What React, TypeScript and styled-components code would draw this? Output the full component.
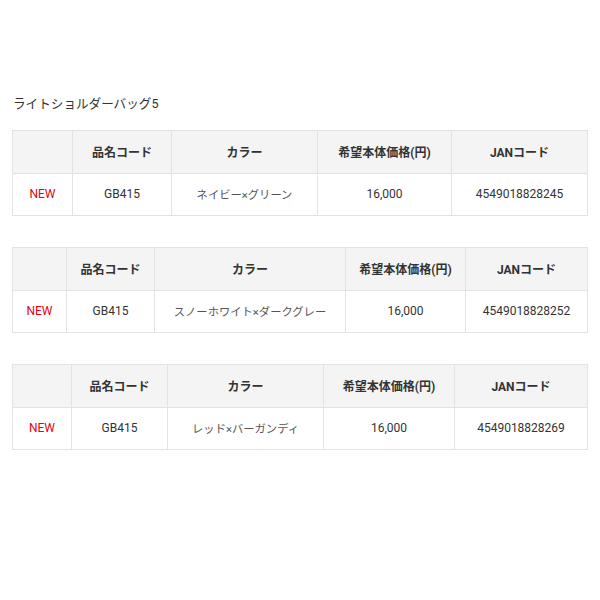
import React from "react";
import styled, { createGlobalStyle } from "styled-components";

const GlobalStyle = createGlobalStyle`
  html, body { margin: 0; padding: 0; background: #fff; }
  body {
    font-family: Roboto, "Noto Sans CJK JP", sans-serif;
    color: #333;
  }
`;

const Page = styled.div`
  padding: 95px 13px 40px 12px;
`;

const Title = styled.h2`
  margin: 0 0 17px 1px;
  font-size: 12.6px;
  font-weight: 400;
  line-height: 18px;
  color: #333;
`;

const Stack = styled.div`
  display: flex;
  flex-direction: column;
  gap: 31px;
`;

const Table = styled.table`
  width: 100%;
  border-collapse: collapse;
  table-layout: fixed;
  font-size: 12px;
`;

const HeadCell = styled.th`
  background: #f4f4f4;
  border: 1px solid #e3e3e3;
  font-weight: 700;
  text-align: center;
  height: 41.5px;
  padding: 0 8px;
  color: #333;
`;

const Cell = styled.td<{ $accent?: boolean; $light?: boolean }>`
  border: 1px solid #e3e3e3;
  text-align: center;
  height: 41.5px;
  padding: 0 8px;
  font-size: ${(p) => (p.$light ? "11.3px" : "12px")};
  color: ${(p) => (p.$accent ? "#e60012" : p.$light ? "#555" : "#333")};
`;

type Item = { code: string; color: string; price: string; jan: string; cols: number[] };

const items: Item[] = [
  { code: "GB415", color: "ネイビー×グリーン", price: "16,000", jan: "4549018828245", cols: [60, 99, 146, 134, 136] },
  { code: "GB415", color: "スノーホワイト×ダークグレー", price: "16,000", jan: "4549018828252", cols: [54, 88, 191, 120, 122] },
  { code: "GB415", color: "レッド×バーガンディ", price: "16,000", jan: "4549018828269", cols: [59, 96, 156, 131, 133] },
];

const headers = ["", "品名コード", "カラー", "希望本体価格(円)", "JANコード"];

export default function App() {
  return (
    <>
      <GlobalStyle />
      <Page>
        <Title>ライトショルダーバッグ5</Title>
        <Stack>
          {items.map((it) => (
            <Table key={it.jan}>
              <colgroup>
                {it.cols.map((w, i) => (
                  <col key={i} style={{ width: w }} />
                ))}
              </colgroup>
              <thead>
                <tr>
                  {headers.map((h, i) => (
                    <HeadCell key={i}>{h}</HeadCell>
                  ))}
                </tr>
              </thead>
              <tbody>
                <tr>
                  <Cell $accent>NEW</Cell>
                  <Cell>{it.code}</Cell>
                  <Cell $light>{it.color}</Cell>
                  <Cell>{it.price}</Cell>
                  <Cell>{it.jan}</Cell>
                </tr>
              </tbody>
            </Table>
          ))}
        </Stack>
      </Page>
    </>
  );
}
